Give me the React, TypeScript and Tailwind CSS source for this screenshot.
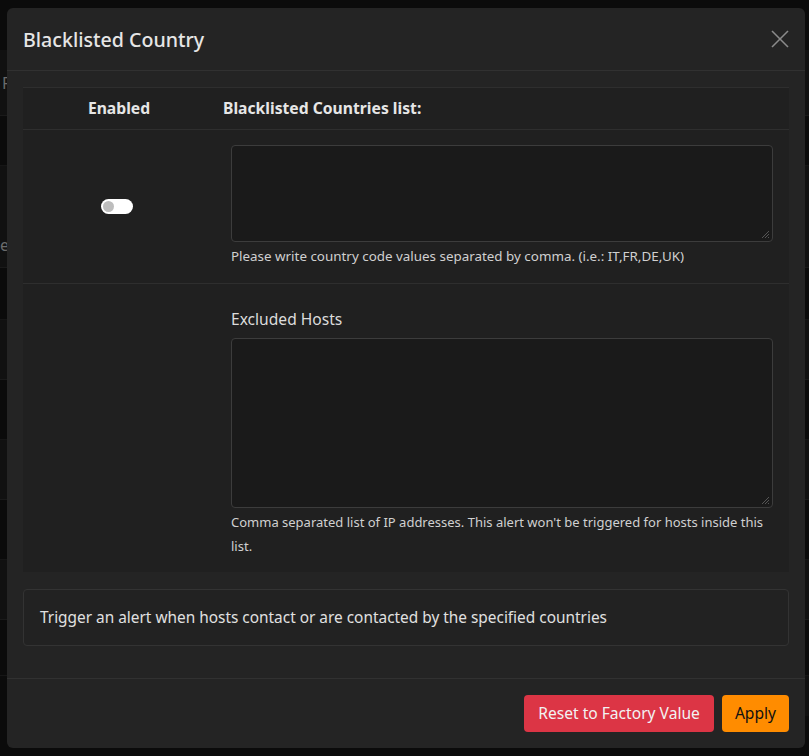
import React from "react";

const font = { fontFamily: '"Noto Sans", "Open Sans", sans-serif' };

function Toggle() {
  return (
    <div className="relative w-[32px] h-[15px] rounded-full bg-white">
      <div className="absolute left-[2px] top-[2px] w-[11px] h-[11px] rounded-full bg-[#bdbdbd]" />
    </div>
  );
}

function Grip() {
  return (
    <svg className="absolute right-[2px] bottom-[2px]" width="9" height="9" viewBox="0 0 9 9">
      <line x1="8" y1="1" x2="1" y2="8" stroke="#555" strokeWidth="1" />
      <line x1="8" y1="4" x2="4" y2="8" stroke="#555" strokeWidth="1" />
      <line x1="8" y1="7" x2="7" y2="8" stroke="#555" strokeWidth="1" />
    </svg>
  );
}

export default function App() {
  return (
    <div className="relative w-[809px] h-[756px] overflow-hidden bg-[#0b0b0b]" style={font}>
      {/* background page */}
      <div className="flex flex-col pt-[50px] text-[#6b6b6b]">
        <div className="h-[66px] bg-[#111111] border-b border-[#1a1a1a] flex items-center px-[2px] text-[16px]">F</div>
        <div className="h-[50px] border-b border-[#161616]" />
        <div className="h-[102px] bg-[#111111] border-b border-[#1a1a1a] flex items-end pb-[10px] text-[16px]">e</div>
        <div className="h-[52px] border-b border-[#161616]" />
        <div className="h-[60px] bg-[#111111] border-b border-[#1a1a1a]" />
        <div className="h-[60px] border-b border-[#161616]" />
        <div className="h-[60px] bg-[#111111] border-b border-[#1a1a1a]" />
        <div className="h-[60px] border-b border-[#161616]" />
        <div className="h-[60px] bg-[#111111] border-b border-[#1a1a1a]" />
        <div className="h-[56px] border-b border-[#161616]" />
        <div className="flex h-[40px] ml-[33px] bg-[#101010]">
          <div className="w-[110px] border-r border-[#1c1c1c] flex justify-center pt-[12px]">
            <div className="flex gap-[3px]">
              <div className="w-[6px] h-[6px] border-2 border-[#6b6b6b]" />
              <div className="w-[6px] h-[6px] border-2 border-[#6b6b6b]" />
            </div>
          </div>
          <div className="pl-[8px] pt-[4px] text-[15.4px]">Detects anomalies in active flows number</div>
        </div>
      </div>

      {/* modal */}
      <div className="absolute left-[7px] top-[8px] w-[798px] h-[740px] rounded-[6px] bg-[#242424] flex flex-col">
        <div className="h-[63px] flex items-center justify-between px-[16px] border-b border-[#313131]">
          <div className="text-[19.6px] text-[#e6e6e6] font-medium pt-[1px]">Blacklisted Country</div>
          <svg width="18" height="18" viewBox="0 0 18 18">
            <line x1="1" y1="1" x2="17" y2="17" stroke="#8a8a8a" strokeWidth="1.6" />
            <line x1="17" y1="1" x2="1" y2="17" stroke="#8a8a8a" strokeWidth="1.6" />
          </svg>
        </div>

        <div className="p-[16px] flex flex-col">
          <div className="bg-[#202020] border-t border-[#2e2e2e] flex flex-col">
            <div className="flex h-[42px] items-center border-b border-[#2e2e2e] text-[15.7px] font-bold text-[#e6e6e6]">
              <div className="w-[192px] text-center">Enabled</div>
              <div className="pl-[8px]">Blacklisted Countries list:</div>
            </div>
            <div className="flex h-[154px] border-b border-[#2e2e2e]">
              <div className="w-[192px] flex items-center justify-center pr-[4px]">
                <Toggle />
              </div>
              <div className="flex-1 px-[16px] pt-[15px]">
                <div className="relative h-[97px] rounded-[4px] border border-[#3c3c3c] bg-[#1a1a1a]">
                  <Grip />
                </div>
                <div className="mt-[4px] text-[13.4px] text-[#d0d0d0]">
                  Please write country code values separated by comma. (i.e.: IT,FR,DE,UK)
                </div>
              </div>
            </div>
            <div className="flex h-[288px]">
              <div className="w-[192px]" />
              <div className="flex-1 px-[16px] pt-[23px]">
                <div className="text-[15.6px] text-[#dcdcdc] leading-[24px]">Excluded Hosts</div>
                <div className="relative mt-[7px] h-[170px] rounded-[4px] border border-[#3c3c3c] bg-[#1a1a1a]">
                  <Grip />
                </div>
                <div className="mt-[2px] text-[13px] leading-[24px] text-[#d0d0d0]">
                  Comma separated list of IP addresses. This alert won't be triggered for hosts inside this list.
                </div>
              </div>
            </div>
          </div>

          <div className="mt-[17px] h-[57px] rounded-[4px] border border-[#333333] bg-[#222222] flex items-center px-[16px] text-[15.4px] text-[#e0e0e0]">
            Trigger an alert when hosts contact or are contacted by the specified countries
          </div>
        </div>

        <div className="mt-auto h-[70px] border-t border-[#313131] flex items-center justify-end gap-[8px] px-[16px]">
          <button className="h-[37px] px-[14px] rounded-[4px] bg-[#dc3545] text-[15.6px] text-[#f2f2f2]">Reset to Factory Value</button>
          <button className="h-[37px] px-[13px] rounded-[4px] bg-[#ff8c00] text-[15.6px] text-[#111]">Apply</button>
        </div>
      </div>
    </div>
  );
}
